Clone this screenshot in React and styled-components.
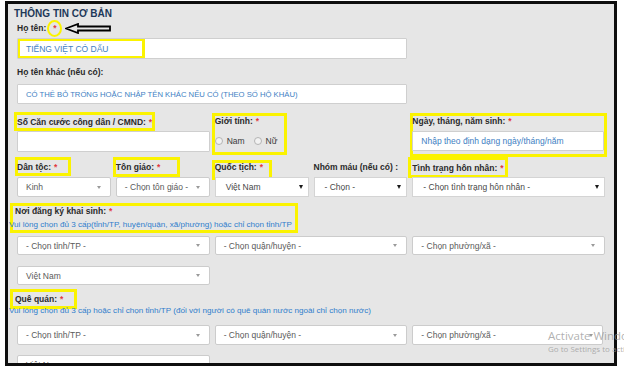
import React from 'react';
import styled, { createGlobalStyle } from 'styled-components';

const Global = createGlobalStyle`
  html, body { margin: 0; padding: 0; background: #ffffff; overflow: hidden; }
  body { font-family: "Liberation Sans", Arial, sans-serif; }
`;

const Page = styled.div`
  position: relative;
  width: 624px;
  height: 370px;
  box-sizing: border-box;
  padding: 1px 0 0 5px;
`;

const Frame = styled.div`
  box-sizing: border-box;
  width: 612px;
  height: 365px;
  border: 3px solid #0e0e0e;
  background: #e6e6e6;
  overflow: hidden;
`;

const Form = styled.div`
  margin-left: 9px;
  width: 588px;
  display: flex;
  flex-direction: column;
  align-items: flex-start;
`;

const Title = styled.div`
  margin: 4px 0 0 -3px;
  font-size: 10px;
  line-height: 12px;
  font-weight: bold;
  color: #1d3858;
  white-space: nowrap;
`;

const Label = styled.div`
  font-size: 8.5px;
  line-height: 12px;
  font-weight: bold;
  color: #2a2a2a;
  white-space: nowrap;
  margin-top: ${p => p.$mt || 0}px;
  margin-left: ${p => p.$ml || 0}px;
`;

const Req = styled.span`
  color: #e2383d;
  margin-left: 3px;
`;

const Help = styled.div`
  font-size: 8.1px;
  line-height: 10px;
  color: #2f7dcc;
  white-space: nowrap;
  margin-top: ${p => p.$mt || 0}px;
  margin-left: ${p => p.$ml || 0}px;
`;

const Mark = styled.div`
  box-sizing: border-box;
  box-shadow: inset 0 0 0 3px #fbf300;
  width: ${p => p.$w}px;
  height: ${p => p.$h}px;
  margin-left: ${p => p.$x}px;
  margin-top: ${p => p.$y || 0}px;
  padding-left: ${p => (p.$pl != null ? p.$pl : -p.$x)}px;
  display: flex;
  flex-direction: column;
  align-items: flex-start;
  justify-content: ${p => (p.$center ? 'center' : 'flex-start')};
  flex-shrink: 0;
`;

const NameRow = styled.div`
  display: flex;
  align-items: center;
  height: 16px;
  margin-top: 0;
`;

const Ring = styled.span`
  box-sizing: border-box;
  display: inline-flex;
  align-items: center;
  justify-content: center;
  width: 15px;
  height: 17px;
  margin-left: 1px;
  border: 2px solid #fbf300;
  border-radius: 50%;
  color: #e2383d;
  font-size: 8.5px;
  font-weight: bold;
`;

const Arrow = styled.svg`
  margin-left: 3px;
  display: block;
`;

const TextBox = styled.div`
  box-sizing: border-box;
  display: flex;
  align-items: center;
  width: ${p => p.$w}px;
  height: ${p => p.$h || 21}px;
  margin-top: ${p => p.$mt || 0}px;
  background: #ffffff;
  border: 1px solid #cfcfcf;
  border-radius: 1px;
  padding-left: ${p => (p.$pl != null ? p.$pl : 8)}px;
  font-size: ${p => p.$fs || 8.5}px;
  color: #3e80c3;
  white-space: nowrap;
  overflow: hidden;
`;

const InnerMark = styled.div`
  box-sizing: border-box;
  align-self: stretch;
  margin: -1px 0 -1px -1px;
  width: ${p => p.$w}px;
  border: 3px solid #fbf300;
  display: flex;
  align-items: center;
  padding-left: 6px;
`;

const Grid = styled.div`
  display: grid;
  grid-template-columns: repeat(6, 1fr);
  grid-template-rows: ${p => p.$rows || 'auto'};
  column-gap: 5px;
  width: 588px;
  margin-top: ${p => p.$mt || 0}px;
`;

const Cell = styled.div`
  grid-column: span ${p => p.$span || 1};
  display: flex;
  flex-direction: column;
  align-items: flex-start;
  justify-content: ${p => (p.$center ? 'center' : 'flex-start')};
  min-width: 0;
`;

const SelectBox = styled.div`
  box-sizing: border-box;
  display: flex;
  align-items: center;
  justify-content: space-between;
  width: ${p => (p.$w ? `${p.$w}px` : '100%')};
  height: ${p => p.$h || 20}px;
  margin-top: ${p => p.$mt || 0}px;
  background: #ffffff;
  border: 1px solid ${p => (p.$native ? '#d4d4d4' : '#cccccc')};
  border-radius: ${p => (p.$native ? 0 : 2)}px;
  padding: 0 ${p => (p.$native ? 5 : 9)}px 0 ${p => (p.$native ? 10 : 8)}px;
  font-size: 8.5px;
  color: ${p => (p.$native ? '#474747' : '#5a5a5a')};
  white-space: nowrap;
`;

const Caret = styled.span`
  width: 0;
  height: 0;
  border-left: 2.5px solid transparent;
  border-right: 2.5px solid transparent;
  border-top: ${p => (p.$native ? '4px solid #1a1a1a' : '3px solid #9a9a9a')};
  flex-shrink: 0;
`;

const Radios = styled.div`
  display: flex;
  align-items: center;
  margin-top: 8px;
  height: 12px;
`;

const Radio = styled.label`
  display: flex;
  align-items: center;
  gap: 4px;
  margin-right: 9px;
  font-size: 8.5px;
  color: #3a3a3a;
`;

const Dot = styled.span`
  box-sizing: border-box;
  width: 8px;
  height: 8px;
  border-radius: 50%;
  border: 1px solid #b4b4b4;
  background: #f2f2f2;
`;

const Watermark = styled.div`
  position: absolute;
  left: 548px;
  top: 328px;
  color: rgba(150, 150, 150, 0.75);
  font-family: "Open Sans", "Liberation Sans", sans-serif;
  white-space: nowrap;
  pointer-events: none;
`;

const WmBig = styled.div`
  font-size: 11.5px;
  line-height: 15px;
`;

const WmSmall = styled.div`
  font-size: 8px;
  line-height: 12px;
`;

function Select({ children, native, ...rest }) {
  return (
    <SelectBox $native={native} {...rest}>
      <span>{children}</span>
      <Caret $native={native} />
    </SelectBox>
  );
}

export default function App() {
  return (
    <>
      <Global />
      <Page>
        <Frame>
          <Form>
            <Title>THÔNG TIN CƠ BẢN</Title>

            <NameRow>
              <Label>Họ tên:</Label>
              <Ring>*</Ring>
              <Arrow width="46" height="11" viewBox="0 0 46 11">
                <polygon
                  points="1,5.5 13,1 13,3.5 45,3.5 45,7.5 13,7.5 13,10"
                  fill="#e6e6e6"
                  stroke="#000"
                  strokeWidth="1.8"
                  strokeLinejoin="miter"
                />
              </Arrow>
            </NameRow>
            <TextBox $w={390} $mt={2} $pl={0}>
              <InnerMark $w={128}>TIẾNG VIỆT CÓ DẤU</InnerMark>
            </TextBox>

            <Label $mt={7}>Họ tên khác (nếu có):</Label>
            <TextBox $w={390} $h={20} $mt={6} $fs={7.7}>
              CÓ THỂ BỎ TRỐNG HOẶC NHẬP TÊN KHÁC NẾU CÓ (THEO SỐ HỘ KHẨU)
            </TextBox>

            <Grid $mt={8} $rows="45px">
              <Cell $span={2}>
                <Mark $x={-3} $w={141} $h={19} $center>
                  <Label>Số Căn cước công dân / CMND:<Req>*</Req></Label>
                </Mark>
                <TextBox $w={193} $h={21} />
              </Cell>
              <Cell $span={2}>
                <Mark $x={-3} $y={1} $w={75} $h={42}>
                  <Label $mt={2}>Giới tính:<Req>*</Req></Label>
                  <Radios>
                    <Radio><Dot />Nam</Radio>
                    <Radio><Dot />Nữ</Radio>
                  </Radios>
                </Mark>
              </Cell>
              <Cell $span={2}>
                <Mark $x={-2} $y={1} $w={197} $h={44}>
                  <Label $mt={2}>Ngày, tháng, năm sinh:<Req>*</Req></Label>
                  <TextBox $w={192} $h={20} $mt={4}>Nhập theo định dạng ngày/tháng/năm</TextBox>
                </Mark>
              </Cell>
            </Grid>

            <Grid $rows="20px 20px">
              <Cell>
                <Mark $x={-2} $w={56} $h={19} $center>
                  <Label>Dân tộc:<Req>*</Req></Label>
                </Mark>
              </Cell>
              <Cell>
                <Mark $x={-3} $w={67} $h={20} $center>
                  <Label>Tôn giáo:<Req>*</Req></Label>
                </Mark>
              </Cell>
              <Cell>
                <Mark $x={-3} $y={3} $w={60} $h={20}>
                  <Label $mt={1}>Quốc tịch:<Req>*</Req></Label>
                </Mark>
              </Cell>
              <Cell $center>
                <Label>Nhóm máu (nếu có) :</Label>
              </Cell>
              <Cell $span={2}>
                <Mark $x={-4} $w={100} $h={21} $center>
                  <Label>Tình trạng hôn nhân:<Req>*</Req></Label>
                </Mark>
              </Cell>
              <Cell><Select>Kinh</Select></Cell>
              <Cell><Select>- Chọn tôn giáo -</Select></Cell>
              <Cell><Select native>Việt Nam</Select></Cell>
              <Cell><Select native>- Chọn -</Select></Cell>
              <Cell $span={2}><Select native>- Chọn tình trạng hôn nhân -</Select></Cell>
            </Grid>

            <Mark $x={-7} $pl={5} $y={6} $w={288} $h={30}>
              <Label $mt={2}>Nơi đăng ký khai sinh:<Req>*</Req></Label>
              <Help $mt={3} $ml={-6}>
                Vui lòng chọn đủ 3 cấp(tỉnh/TP, huyện/quận, xã/phường) hoặc chỉ chọn tỉnh/TP
              </Help>
            </Mark>
            <Grid $mt={3}>
              <Cell $span={2}><Select $h={19}>- Chọn tỉnh/TP -</Select></Cell>
              <Cell $span={2}><Select $h={19}>- Chọn quận/huyện -</Select></Cell>
              <Cell $span={2}><Select $h={19}>- Chọn phường/xã -</Select></Cell>
            </Grid>
            <Select $w={193} $h={19} $mt={11}>Việt Nam</Select>

            <Mark $x={-7} $pl={5} $y={4} $w={67} $h={20}>
              <Label $mt={4}>Quê quán:<Req>*</Req></Label>
            </Mark>
            <Help $mt={-3} $ml={-8}>
              Vui lòng chọn đủ 3 cấp hoặc chỉ chọn tỉnh/TP (đối với người có quê quán nước ngoài chỉ chọn nước)
            </Help>
            <Grid $mt={9}>
              <Cell $span={2}><Select>- Chọn tỉnh/TP -</Select></Cell>
              <Cell $span={2}><Select>- Chọn quận/huyện -</Select></Cell>
              <Cell $span={2}><Select $w={191}>- Chọn phường/xã -</Select></Cell>
            </Grid>
            <Select $w={193} $mt={10}>Việt Nam</Select>
          </Form>
        </Frame>
        <Watermark>
          <WmBig>Activate Windows</WmBig>
          <WmSmall>Go to Settings to activate Windows.</WmSmall>
        </Watermark>
      </Page>
    </>
  );
}
